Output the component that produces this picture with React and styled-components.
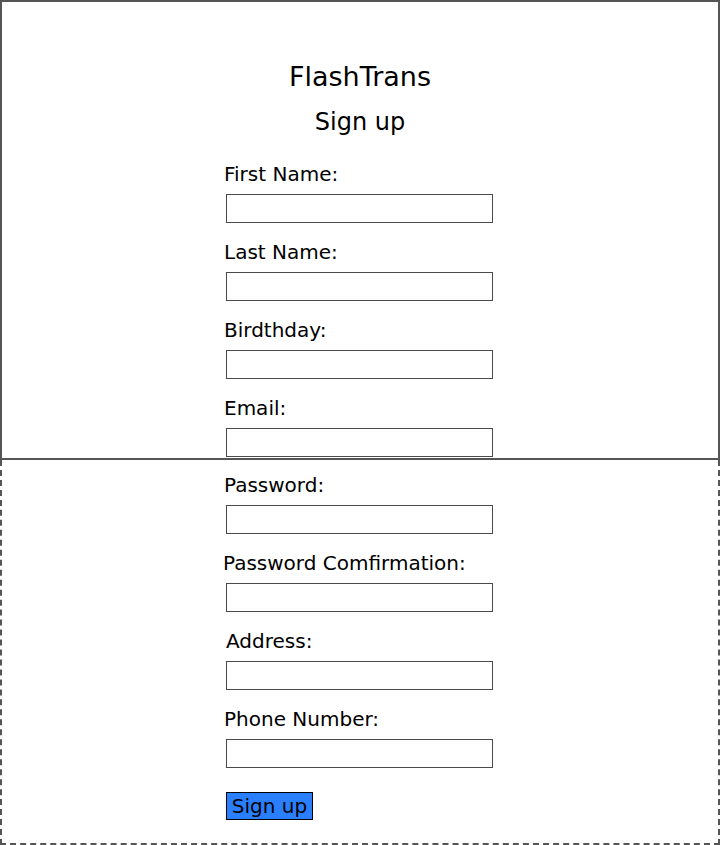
import React from 'react'
import styled, { createGlobalStyle } from 'styled-components'

const GlobalStyle = createGlobalStyle`
  html, body {
    margin: 0;
    padding: 0;
    background: #fff;
  }
  body {
    font-family: "DejaVu Sans", sans-serif;
    color: #000;
  }
`;

const Page = styled.div`
  width: 720px;
  display: flex;
  flex-direction: column;
`;

const Frame = styled.section`
  box-sizing: border-box;
  width: 720px;
  height: ${p => p.$height}px;
  border: 2px ${p => p.$dashed ? 'dashed' : 'solid'} #555;
  ${p => p.$dashed && 'border-top: none;'}
  padding: ${p => p.$padTop}px 0 0 222px;
  display: flex;
  flex-direction: column;
`;

const Title = styled.h1`
  margin: 0 0 14px -222px;
  font-size: 27px;
  line-height: 32px;
  font-weight: 400;
  text-align: center;
`;

const SubTitle = styled.h2`
  margin: 0 0 26px -222px;
  font-size: 24px;
  line-height: 30px;
  font-weight: 400;
  text-align: center;
`;

const Field = styled.div`
  display: flex;
  flex-direction: column;
  margin-bottom: 18px;
`;

const Label = styled.label`
  font-size: 20px;
  line-height: 22px;
  margin-left: ${p => p.$shift || 0}px;
  margin-bottom: 9px;
  white-space: nowrap;
`;

const Input = styled.input`
  box-sizing: border-box;
  width: 267px;
  height: 29px;
  margin: 0 0 0 2px;
  border: 1px solid #4a4a4a;
  padding: 0 4px;
  font-family: inherit;
  font-size: 14px;
  outline: none;
`;

const Button = styled.button`
  box-sizing: border-box;
  align-self: flex-start;
  margin: 6px 0 0 2px;
  width: 87px;
  height: 28px;
  padding: 0;
  background: #2a7fff;
  border: 1px solid #000;
  font-family: inherit;
  font-size: 20px;
  line-height: 24px;
  color: #000;
  cursor: pointer;
`;

const topFields = [
  { label: 'First Name:' },
  { label: 'Last Name:' },
  { label: 'Birdthday:' },
  { label: 'Email:' },
];

const bottomFields = [
  { label: 'Password:' },
  { label: 'Password Comfirmation:', shift: -1 },
  { label: 'Address:', shift: 2 },
  { label: 'Phone Number:' },
];

const FormField = ({ label, shift }) => (
  <Field>
    <Label $shift={shift}>{label}</Label>
    <Input type="text" />
  </Field>
);

const App = () => {
  return (
    <Page>
      <GlobalStyle />
      <Frame $height={460} $padTop={59}>
        <Title>FlashTrans</Title>
        <SubTitle>Sign up</SubTitle>
        {topFields.map(f => <FormField key={f.label} {...f} />)}
      </Frame>
      <Frame $dashed $height={385} $padTop={14}>
        {bottomFields.map(f => <FormField key={f.label} {...f} />)}
        <Button>Sign up</Button>
      </Frame>
    </Page>
  )
}

export default App
